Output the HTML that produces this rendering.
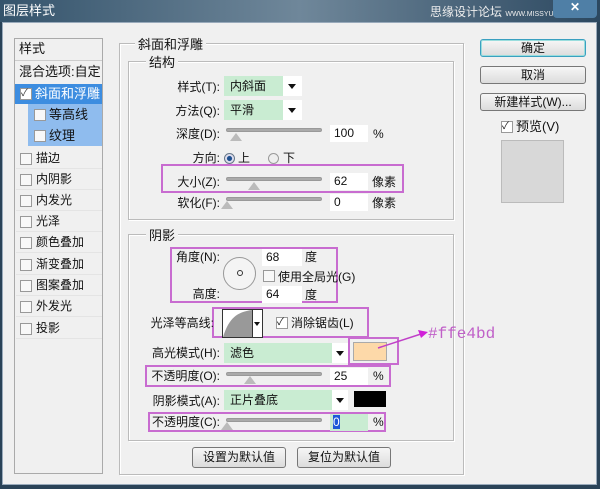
<!DOCTYPE html>
<html><head><meta charset="utf-8"><style>
*{margin:0;padding:0;box-sizing:border-box}
body{width:600px;height:489px;overflow:hidden;background:#2a4358;font-family:"Liberation Sans","Noto Sans CJK SC",sans-serif;font-size:12px;color:#111;position:relative}
.a{position:absolute}
.t{position:absolute;white-space:nowrap;line-height:14px}
.r{text-align:right}
.fs{position:absolute;border:1px solid #bbb;box-shadow:1px 1px 0 #fff inset,1px 1px 0 #fff}
.lg{position:absolute;background:#f0f0f0;padding:0 3px;font-size:13px}
.sl{position:absolute;height:4px;background:#aaa;border:1px solid #999;border-radius:2px}
.th{position:absolute;width:0;height:0;border-left:6px solid transparent;border-right:6px solid transparent;border-bottom:8px solid #ddd}
.in{position:absolute;background:#fff;height:17px;padding-left:4px;line-height:17px}
.dd{position:absolute;height:20px;background:#fff}
.dd .g{position:absolute;left:0;top:0;bottom:0;width:59px;background:#c9ecd2;padding-left:6px;line-height:20px}
.dd .ar{position:absolute;right:6px;top:8px;border-left:4px solid transparent;border-right:4px solid transparent;border-top:5px solid #111}
.cb{position:absolute;width:12px;height:12px;border:1px solid #999;background:#f8f8f8}
.pb{position:absolute;border:2px solid #c86cd0}
.btn{position:absolute;border:1px solid #777;border-radius:3px;background:linear-gradient(#f6f6f6,#dcdcdc);text-align:center;line-height:17px;font-size:12px}
.li{position:absolute;left:16px;width:86px;height:21px;line-height:21px;border-bottom:1px solid #e4e4e4}
.li .cb{left:4px;top:5px}
.li span{position:absolute;left:20px}
</style></head><body>
<div class="a" style="left:0;top:0;width:600px;height:22px;background:linear-gradient(90deg,#35546c,#6f879a 50%,#2c4860)"></div>
<div class="t" style="left:3px;top:4px;color:#fff;font-size:13px">图层样式</div>
<div class="t" style="left:430px;top:5px;color:#eee;font-size:12px">思缘设计论坛 <span style="font-size:7px">WWW.MISSYUAN.COM</span></div>
<div class="a" style="left:553px;top:0;width:44px;height:18px;background:#4f7fa6;border-radius:0 0 4px 4px;color:#fff;text-align:center;font-weight:bold">✕</div>
<div class="a" style="left:2px;top:22px;width:595px;height:463px;background:#f0f0f0;border:1px solid #9ab"></div>

<div class="a" style="left:14px;top:38px;width:89px;height:436px;border:1px solid #aaa;background:#f0f0f0"></div>
<div class="t" style="left:19px;top:42px;font-size:13px">样式</div>
<div class="a" style="left:15px;top:60px;width:87px;height:1px;background:#ccc"></div>
<div class="t" style="left:19px;top:65px;font-size:13px">混合选项:自定</div>
<div class="a" style="left:15px;top:84px;width:87px;height:20px;background:#3d8de0"></div>
<div class="cb" style="left:20px;top:88px;background:#fff;font-size:10px;line-height:10px;color:#333">✓</div>
<div class="t" style="left:35px;top:87px;color:#fff;font-size:13px">斜面和浮雕</div>
<div class="a" style="left:28px;top:104px;width:74px;height:42px;background:#8fbcee"></div>
<div class="cb" style="left:34px;top:109px"></div><div class="t" style="left:49px;top:108px;font-size:13px">等高线</div>
<div class="cb" style="left:34px;top:130px"></div><div class="t" style="left:49px;top:129px;font-size:13px">纹理</div>
<div class="li" style="top:148px"><div class="cb"></div><span>描边</span></div>
<div class="li" style="top:169px"><div class="cb"></div><span>内阴影</span></div>
<div class="li" style="top:190px"><div class="cb"></div><span>内发光</span></div>
<div class="li" style="top:211px"><div class="cb"></div><span>光泽</span></div>
<div class="li" style="top:232px"><div class="cb"></div><span>颜色叠加</span></div>
<div class="li" style="top:254px"><div class="cb"></div><span>渐变叠加</span></div>
<div class="li" style="top:275px"><div class="cb"></div><span>图案叠加</span></div>
<div class="li" style="top:296px"><div class="cb"></div><span>外发光</span></div>
<div class="li" style="top:318px"><div class="cb"></div><span>投影</span></div>

<div class="fs" style="left:119px;top:43px;width:345px;height:432px"></div>
<div class="lg" style="left:135px;top:34px">斜面和浮雕</div>
<div class="fs" style="left:128px;top:61px;width:326px;height:159px"></div>
<div class="lg" style="left:146px;top:52px">结构</div>

<div class="t r" style="left:140px;top:80px;width:80px">样式(T):</div>
<div class="dd" style="left:224px;top:76px;width:78px"><div class="g">内斜面</div><div class="ar"></div></div>
<div class="t r" style="left:140px;top:104px;width:80px">方法(Q):</div>
<div class="dd" style="left:224px;top:100px;width:78px"><div class="g">平滑</div><div class="ar"></div></div>
<div class="t r" style="left:140px;top:127px;width:80px">深度(D):</div>
<div class="sl" style="left:226px;top:128px;width:96px"></div><div class="th" style="left:230px;top:133px;border-bottom-color:#bbb"></div>
<div class="in" style="left:330px;top:125px;width:38px">100</div><div class="t" style="left:373px;top:127px">%</div>
<div class="t r" style="left:170px;top:151px;width:50px">方向:</div>
<div class="a" style="left:224px;top:153px;width:11px;height:11px;border-radius:50%;border:1px solid #678;background:radial-gradient(#1d4f8f 35%,#dde 45%)"></div>
<div class="t" style="left:238px;top:151px">上</div>
<div class="a" style="left:268px;top:153px;width:11px;height:11px;border-radius:50%;border:1px solid #999;background:#eee"></div>
<div class="t" style="left:283px;top:151px">下</div>
<div class="pb" style="left:161px;top:164px;width:243px;height:29px"></div>
<div class="t r" style="left:140px;top:175px;width:80px">大小(Z):</div>
<div class="sl" style="left:226px;top:177px;width:96px"></div><div class="th" style="left:248px;top:182px;border-bottom-color:#bbb"></div>
<div class="in" style="left:330px;top:173px;width:38px">62</div><div class="t" style="left:372px;top:175px">像素</div>
<div class="t r" style="left:140px;top:196px;width:80px">软化(F):</div>
<div class="sl" style="left:226px;top:197px;width:96px"></div><div class="th" style="left:221px;top:201px;border-bottom-color:#bbb"></div>
<div class="in" style="left:330px;top:194px;width:38px">0</div><div class="t" style="left:372px;top:196px">像素</div>

<div class="fs" style="left:128px;top:234px;width:326px;height:207px"></div>
<div class="lg" style="left:146px;top:225px">阴影</div>
<div class="pb" style="left:170px;top:247px;width:168px;height:56px"></div>
<div class="t r" style="left:150px;top:250px;width:70px">角度(N):</div>
<div class="in" style="left:262px;top:249px;width:40px">68</div><div class="t" style="left:305px;top:250px">度</div>
<div class="a" style="left:223px;top:257px;width:33px;height:33px;border-radius:50%;border:1px solid #999;background:#f4f4f4"></div>
<div class="a" style="left:237px;top:270px;width:6px;height:6px;border-radius:50%;border:1px solid #333"></div>
<div class="cb" style="left:263px;top:270px"></div><div class="t" style="left:278px;top:270px">使用全局光(G)</div>
<div class="t r" style="left:150px;top:287px;width:70px">高度:</div>
<div class="in" style="left:262px;top:286px;width:40px">64</div><div class="t" style="left:305px;top:288px">度</div>
<div class="pb" style="left:212px;top:307px;width:157px;height:31px"></div>
<div class="t r" style="left:130px;top:316px;width:84px">光泽等高线:</div>
<div class="a" style="left:222px;top:309px;width:41px;height:29px;background:#fff;border:1px solid #333"></div>
<svg class="a" style="left:223px;top:310px" width="29" height="27"><path d="M0 27 C6 8 14 2 29 0 L29 27 Z" fill="#999"/></svg>
<div class="a" style="left:252px;top:310px;width:1px;height:27px;background:#333"></div>
<div class="a" style="left:254px;top:322px;border-left:3px solid transparent;border-right:3px solid transparent;border-top:4px solid #111"></div>
<div class="cb" style="left:276px;top:317px;background:#fff;font-size:10px;line-height:10px">✓</div>
<div class="t" style="left:291px;top:316px">消除锯齿(L)</div>
<div class="t r" style="left:130px;top:346px;width:90px">高光模式(H):</div>
<div class="dd" style="left:224px;top:343px;width:124px"><div class="g" style="width:108px">滤色</div><div class="ar" style="right:4px"></div></div>
<div class="pb" style="left:348px;top:337px;width:51px;height:28px"></div>
<div class="a" style="left:353px;top:342px;width:34px;height:19px;background:#fdd9a9;border:1px solid #aaa"></div>
<svg class="a" style="left:370px;top:325px" width="60" height="30"><line x1="8" y1="23" x2="54" y2="8" stroke="#c040c8" stroke-width="1.5"/><path d="M58 7 L48 5 L51 13 Z" fill="#d020d8"/></svg>
<div class="t" style="left:428px;top:326px;color:#c060c8;font-family:'Liberation Mono',monospace;font-size:16px;line-height:16px">#ffe4bd</div>
<div class="pb" style="left:145px;top:365px;width:246px;height:22px"></div>
<div class="t r" style="left:130px;top:369px;width:90px">不透明度(O):</div>
<div class="sl" style="left:226px;top:372px;width:96px"></div><div class="th" style="left:244px;top:376px;border-bottom-color:#bbb"></div>
<div class="in" style="left:330px;top:368px;width:38px">25</div><div class="t" style="left:373px;top:369px">%</div>
<div class="t r" style="left:130px;top:394px;width:90px">阴影模式(A):</div>
<div class="dd" style="left:224px;top:390px;width:124px"><div class="g" style="width:108px">正片叠底</div><div class="ar" style="right:4px"></div></div>
<div class="a" style="left:354px;top:391px;width:32px;height:16px;background:#000"></div>
<div class="pb" style="left:148px;top:412px;width:238px;height:20px"></div>
<div class="t r" style="left:130px;top:415px;width:90px">不透明度(C):</div>
<div class="sl" style="left:226px;top:418px;width:96px"></div><div class="th" style="left:221px;top:422px;border-bottom-color:#bbb"></div>
<div class="in" style="left:330px;top:414px;width:38px;background:#c9ecd2;padding-left:3px"><span style="background:#1e5ad8;color:#fff">0</span></div><div class="t" style="left:373px;top:415px">%</div>
<div class="btn" style="left:192px;top:447px;width:94px;height:21px;line-height:19px">设置为默认值</div>
<div class="btn" style="left:297px;top:447px;width:94px;height:21px;line-height:19px">复位为默认值</div>

<div class="btn" style="left:480px;top:39px;width:106px;height:18px;border-color:#3aa0c0;box-shadow:0 0 0 1px #9dd inset">确定</div>
<div class="btn" style="left:480px;top:66px;width:106px;height:18px">取消</div>
<div class="btn" style="left:480px;top:93px;width:106px;height:18px">新建样式(W)...</div>
<div class="cb" style="left:501px;top:121px;background:#fff;font-size:10px;line-height:10px">✓</div>
<div class="t" style="left:516px;top:120px;font-size:13px">预览(V)</div>
<div class="a" style="left:501px;top:140px;width:63px;height:63px;background:#d8d8d8;border:1px solid #bbb"></div>
</body></html>
